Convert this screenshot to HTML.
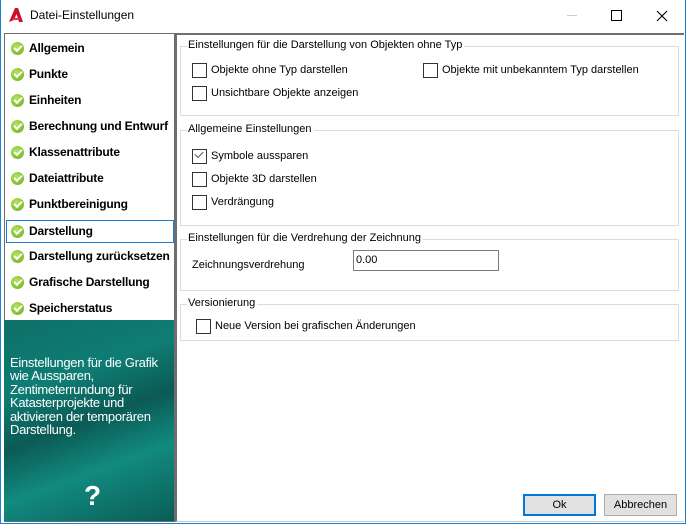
<!DOCTYPE html>
<html><head><style>
*{margin:0;padding:0;box-sizing:border-box}
body{width:686px;height:524px;overflow:hidden;background:#fff;font-family:"Liberation Sans",sans-serif;font-size:11px;color:#000;position:relative}
.win{position:absolute;left:0;top:0;width:686px;height:524px;border:1px solid #1883d7;border-top:none}
.abs{position:absolute;white-space:nowrap}
.title{left:30px;top:8px;font-size:12px}
.list{left:4px;top:33px;width:171px;height:288px;border:1px solid #6e6e6e;border-bottom:none;background:#fff}
.item{position:absolute;left:2px;height:21px;width:167px;font-weight:bold;font-size:12px;letter-spacing:-0.2px;white-space:nowrap;line-height:21px;padding-left:22px}
.item .ck{position:absolute;left:4px;top:4px;width:13px;height:13px;border-radius:50%;background:radial-gradient(circle at 40% 35%,#b4e65a,#6aaa1e)}
.item .ck:after{content:"";position:absolute;left:3px;top:3px;width:6px;height:3px;border-left:2px solid #fff;border-bottom:2px solid #fff;transform:rotate(-45deg)}
.sel{border:1px solid #1a7fd4}
.teal{left:4px;top:320px;width:171px;height:202px;background:linear-gradient(160deg,#0d6f68 0%,#0f7d74 30%,#0b5a55 50%,#128a7f 70%,#0a5d57 100%);border-right:1px solid #6e6e6e;border-bottom:1px solid #6e6e6e}
.teal p{position:absolute;left:6px;top:36px;color:#fff;font-size:13px;line-height:13.4px;letter-spacing:-0.3px;white-space:nowrap}
.q{position:absolute;left:80px;top:160px;color:#fff;font-weight:bold;font-size:28px}
.right{left:175px;top:33px;width:509px;height:489px;border-left:2px solid #6e6e6e;border-top:2px solid #6e6e6e;border-bottom:1px solid #ccc;background:#fff}
.gb{position:absolute;border:1px solid #dcdcdc}
.gb .lg{position:absolute;left:6px;top:-8px;background:#fff;padding:0 2px 0 1px;font-size:11px;white-space:nowrap}
.cb{position:absolute;font-size:11px;line-height:14px;padding-left:19px;white-space:nowrap}
.cb:before{content:"";position:absolute;left:0;top:0;width:13px;height:13px;border:1px solid #333;background:#fff}
.cb.on:after{content:"";position:absolute;left:3px;top:2px;width:7px;height:4px;border-left:1.5px solid #555;border-bottom:1.5px solid #555;transform:rotate(-45deg)}
.btn{position:absolute;height:22px;text-align:center;line-height:20px;font-size:11px;background:#e1e1e1;border:1px solid #adadad}
</style></head><body>
<div class="win"></div>
<svg class="abs" style="left:8px;top:7px" width="16" height="16" viewBox="0 0 16 16"><path d="M1 15 L7 1 H10 L15 15 H11 L8.5 7 L6 13 Z" fill="#c8102e"/><path d="M5 11 H11 L11.5 13 H4.5 Z" fill="#e33"/></svg>
<div class="abs title">Datei-Einstellungen</div>
<div class="abs" style="left:567px;top:15px;width:10px;height:1px;background:#ccc"></div>
<div class="abs" style="left:611px;top:10px;width:11px;height:11px;border:1px solid #000"></div>
<svg class="abs" style="left:656px;top:10px" width="12" height="12"><path d="M1 1L11 11M11 1L1 11" stroke="#000" stroke-width="1.1"/></svg>

<div class="abs list">
<div class="item" style="top:4px"><span class="ck"></span>Allgemein</div>
<div class="item" style="top:30px"><span class="ck"></span>Punkte</div>
<div class="item" style="top:56px"><span class="ck"></span>Einheiten</div>
<div class="item" style="top:82px"><span class="ck"></span>Berechnung und Entwurf</div>
<div class="item" style="top:108px"><span class="ck"></span>Klassenattribute</div>
<div class="item" style="top:134px"><span class="ck"></span>Dateiattribute</div>
<div class="item" style="top:160px"><span class="ck"></span>Punktbereinigung</div>
<div class="item sel" style="top:186px;left:1px;width:168px;height:23px"><span class="ck"></span>Darstellung</div>
<div class="item" style="top:212px"><span class="ck"></span>Darstellung zurücksetzen</div>
<div class="item" style="top:238px"><span class="ck"></span>Grafische Darstellung</div>
<div class="item" style="top:264px"><span class="ck"></span>Speicherstatus</div>
</div>
<div class="abs teal"><p>Einstellungen für die Grafik<br>wie Aussparen,<br>Zentimeterrundung für<br>Katasterprojekte und<br>aktivieren der temporären<br>Darstellung.</p><div class="q">?</div></div>

<div class="abs right"></div>
<div class="gb" style="left:180px;top:46px;width:499px;height:70px"><span class="lg">Einstellungen für die Darstellung von Objekten ohne Typ</span></div>
<div class="cb" style="left:192px;top:63px">Objekte ohne Typ darstellen</div>
<div class="cb" style="left:423px;top:63px">Objekte mit unbekanntem Typ darstellen</div>
<div class="cb" style="left:192px;top:86px">Unsichtbare Objekte anzeigen</div>

<div class="gb" style="left:180px;top:130px;width:499px;height:96px"><span class="lg">Allgemeine Einstellungen</span></div>
<div class="cb on" style="left:192px;top:149px">Symbole aussparen</div>
<div class="cb" style="left:192px;top:172px">Objekte 3D darstellen</div>
<div class="cb" style="left:192px;top:195px">Verdrängung</div>

<div class="gb" style="left:180px;top:239px;width:499px;height:52px"><span class="lg">Einstellungen für die Verdrehung der Zeichnung</span></div>
<div class="abs" style="left:192px;top:259px">Zeichnungsverdrehung</div>
<div class="abs" style="left:353px;top:250px;width:146px;height:21px;border:1px solid #7a7a7a;padding:3px 2px;line-height:13px">0.00</div>

<div class="gb" style="left:180px;top:304px;width:499px;height:37px"><span class="lg">Versionierung</span></div>
<div class="cb" style="left:196px;top:319px">Neue Version bei grafischen Änderungen</div>

<div class="btn" style="left:523px;top:494px;width:73px;border:2px solid #0078d7;line-height:18px">Ok</div>
<div class="btn" style="left:604px;top:494px;width:73px">Abbrechen</div>
</body></html>
